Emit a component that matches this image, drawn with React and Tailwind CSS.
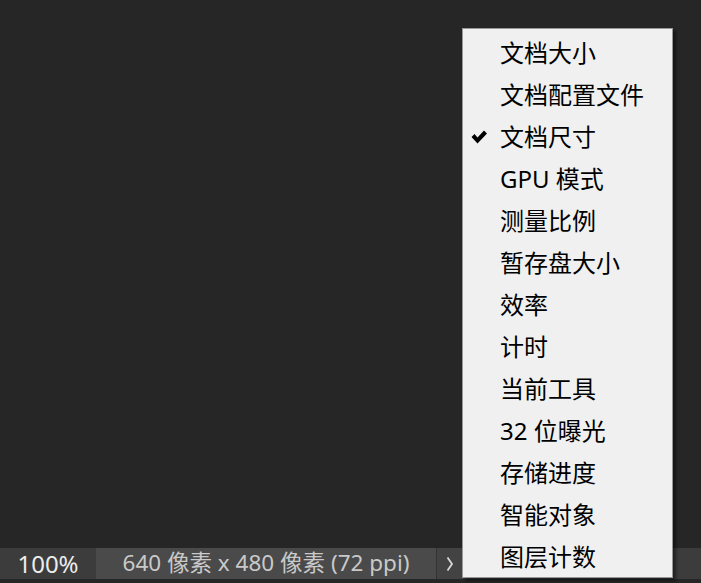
import React from 'react';

const items = [
  '文档大小',
  '文档配置文件',
  '文档尺寸',
  'GPU 模式',
  '测量比例',
  '暂存盘大小',
  '效率',
  '计时',
  '当前工具',
  '32 位曝光',
  '存储进度',
  '智能对象',
  '图层计数',
];

const font = { fontFamily: '"Noto Sans", "Noto Sans CJK SC", sans-serif' };

const Check = () => (
  <svg width="17" height="14" viewBox="0 0 17 14" className="absolute left-[8px] top-[14px]">
    <path d="M0.5 7 L3.5 4 L6.5 7.5 L13 0.5 L16 3.5 L6.5 13.5 Z" fill="#000" />
  </svg>
);

const Chevron = () => (
  <svg width="8" height="16" viewBox="0 0 8 16">
    <path d="M1.5 1.5 L6 8 L1.5 14.5" fill="none" stroke="#d8d8d8" strokeWidth="1.8" />
  </svg>
);

export default function App() {
  return (
    <div className="relative w-[701px] h-[583px] bg-[#262626] flex flex-col overflow-hidden" style={font}>
      <div className="flex-1" />
      <div className="h-[31px] flex items-stretch mb-[4px] leading-none">
        <div className="w-[96px] bg-[#3c3c3c] text-[#ececec] text-[24px] flex items-center justify-center">100%</div>
        <div className="w-[340px] bg-[#4a4a4a] text-[#c9c9c9] text-[22.5px] flex items-center justify-center">
          640 像素 x 480 像素 (72 ppi)
        </div>
        <div className="w-[1px] bg-[#333333]" />
        <div className="w-[25px] bg-[#434343] flex items-center justify-center">
          <Chevron />
        </div>
        <div className="flex-1 bg-[#3c3c3c]" />
      </div>

      <div className="absolute left-[462px] top-[28px] w-[211px] h-[550px] bg-[#f0f0f0] border border-[#979797] shadow-[3px_3px_3px_rgba(0,0,0,0.45)] pt-[3px]">
        {items.map((t, i) => (
          <div key={t} className="relative h-[42px] pl-[37px] flex items-center text-[24px] text-black leading-none" style={font}>
            {i === 2 && <Check />}
            {t}
          </div>
        ))}
      </div>
    </div>
  );
}
